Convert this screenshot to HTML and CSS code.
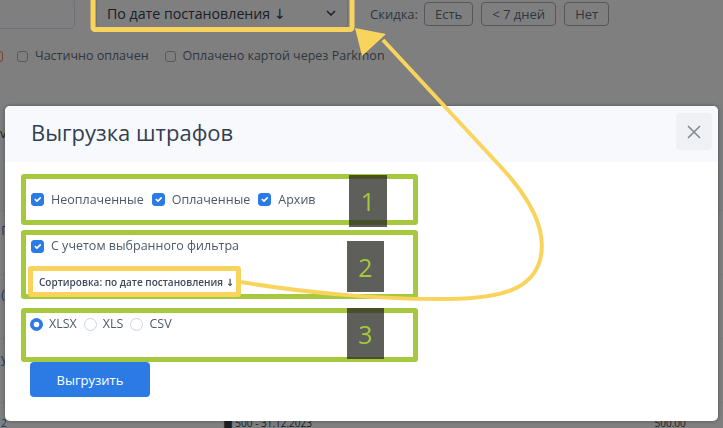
FILE: index.html
```html
<!DOCTYPE html>
<html lang="ru">
<head>
    <meta charset="UTF-8">
    <meta name="viewport" content="width=device-width, initial-scale=1.0">
    <title>Штрафы</title>
    <link rel="stylesheet" href="styles.css">
</head>
<body>
    <div class="page">
        <div class="toolbar">
            <div class="search"></div>
            <div class="sort-select">
                <span>По дате постановления ↓</span>
                <svg width="10" height="6" viewBox="0 0 10 6"><polyline points="1,1 5,5 9,1" fill="none" stroke="#344050" stroke-width="1.5"/></svg>
            </div>
            <div class="discount">
                <span class="discount-label">Скидка:</span>
                <button class="btn-outline">Есть</button>
                <button class="btn-outline">&lt; 7 дней</button>
                <button class="btn-outline">Нет</button>
            </div>
        </div>
        <div class="filters">
            <span class="box box-orange"></span>
            <label class="filter"><span class="box"></span>Частично оплачен</label>
            <label class="filter"><span class="box"></span>Оплачено картой через Parkmon</label>
        </div>
        <div class="table">
            <div class="table-head">v</div>
            <div class="table-row"><span class="cell-first">Г</span></div>
            <div class="table-row"><span class="cell-first">(</span></div>
            <div class="table-row"><span class="cell-first">у</span></div>
            <div class="table-row table-row-last">
                <span class="cell-first">2</span>
                <span class="cell-mid">■ 500 - 31.12.2023</span>
                <span class="cell-sum">500.00</span>
            </div>
        </div>
    </div>

    <div class="overlay">
        <div class="modal">
            <div class="modal-header">
                <h2 class="modal-title">Выгрузка штрафов</h2>
                <button class="btn-close">
                    <svg width="14" height="14" viewBox="0 0 14 14"><path d="M1 1L13 13M13 1L1 13" stroke="#858a92" stroke-width="1.6"/></svg>
                </button>
            </div>
            <div class="modal-body">
                <div class="group group-status">
                    <label class="check"><input type="checkbox" checked>Неоплаченные</label>
                    <label class="check"><input type="checkbox" checked>Оплаченные</label>
                    <label class="check"><input type="checkbox" checked>Архив</label>
                    <span class="mark mark-1">1</span>
                </div>
                <div class="group group-filter">
                    <label class="check"><input type="checkbox" checked>С учетом выбранного фильтра</label>
                    <div class="sort-note">Сортировка: по дате постановления ↓</div>
                    <span class="mark mark-2">2</span>
                </div>
                <div class="group group-format">
                    <label class="radio"><input type="radio" name="format" checked>XLSX</label>
                    <label class="radio"><input type="radio" name="format">XLS</label>
                    <label class="radio"><input type="radio" name="format">CSV</label>
                    <span class="mark mark-3">3</span>
                </div>
                <button class="btn-primary">Выгрузить</button>
            </div>
        </div>
    </div>

    <svg class="annotations" width="723" height="428" viewBox="0 0 723 428">
        <rect x="93" y="-3" width="259" height="32.5" rx="2" fill="none" stroke="#f9d45c" stroke-width="5"/>
        <path d="M383 40 L500 166 C530 198 548 230 540 260 C532 288 505 298 450 299 C380 300 300 292 241 282" fill="none" stroke="#f9d45c" stroke-width="4"/>
        <polygon points="355,28 386,34 362,56" fill="#f9d45c"/>
    </svg>
</body>
</html>
```

FILE: styles.css
```css
* {
    box-sizing: border-box;
}

body {
    margin: 0;
    width: 723px;
    height: 428px;
    overflow: hidden;
    background: #fff;
    font-family: 'Open Sans', 'DejaVu Sans', sans-serif;
    color: #5e6e82;
}

/* page behind the modal */
.page {
    height: 428px;
    overflow: hidden;
}

.toolbar {
    display: flex;
    align-items: flex-start;
    margin-top: -2px;
}

.search {
    width: 85px;
    height: 31px;
    margin-left: -10px;
    border: 1px solid #d8e2ef;
    border-radius: 5px;
}

.sort-select {
    width: 252px;
    height: 30px;
    margin-left: 21px;
    padding: 0 11px 0 10px;
    border: 1px solid #d8e2ef;
    border-radius: 4px;
    display: flex;
    align-items: center;
    justify-content: space-between;
    font-size: 14.2px;
    color: #344050;
}

.discount {
    display: flex;
    align-items: center;
    margin-left: 22px;
    margin-top: 4px;
}

.discount-label {
    font-size: 13px;
    margin-right: 6px;
}

.btn-outline {
    height: 24px;
    padding: 0 10px;
    margin-right: 8px;
    border: 1px solid #a9aeb6;
    border-radius: 4px;
    background: transparent;
    font-family: inherit;
    font-size: 13px;
    color: #5e6e82;
}

.filters {
    display: flex;
    align-items: center;
    margin-top: 19px;
    font-size: 12.5px;
    line-height: 16px;
}

.box {
    width: 11px;
    height: 11px;
    margin-right: 7px;
    border: 1px solid #aab3bf;
    border-radius: 3px;
    background: #fff;
}

.box-orange {
    margin-left: -8px;
    margin-right: 14px;
    border-color: #f5803e;
}

.filter {
    display: flex;
    align-items: center;
    margin-right: 16px;
}

.table {
    margin-top: 46px;
    font-size: 13px;
}

.table-head {
    height: 101px;
    padding-top: 14px;
    background: #f9fafd;
    border-bottom: 1px solid #edf2f9;
    color: #344050;
}

.table-row {
    height: 64px;
    padding-top: 10px;
    border-bottom: 1px solid #edf2f9;
}

.table-row-last {
    height: 25px;
    padding-top: 15px;
    border-bottom: 0;
    font-size: 10px;
    line-height: 10px;
}

.cell-first {
    padding-left: 1px;
    color: #2c7be5;
}

.cell-mid {
    margin-left: 214px;
    color: #344050;
}

.cell-sum {
    margin-left: 340px;
    color: #344050;
}

/* modal */
.overlay {
    position: fixed;
    inset: 0;
    padding: 106px 5px 0;
    background: rgba(0, 0, 0, 0.5);
}

.modal {
    background: #fff;
    border-radius: 5px;
    box-shadow: 0 0 4px rgba(0, 0, 0, 0.35);
    overflow: hidden;
}

.modal-header {
    height: 56px;
    padding: 0 6px 0 26px;
    display: flex;
    justify-content: space-between;
    align-items: flex-start;
    background: #f8f9fd;
}

.modal-title {
    margin: 0;
    font-size: 22px;
    font-weight: 400;
    line-height: 52px;
    color: #344050;
}

.btn-close {
    width: 36px;
    height: 37px;
    margin-top: 7px;
    border: 0;
    border-radius: 4px;
    background: #eff1f5;
    display: flex;
    align-items: center;
    justify-content: center;
}

.modal-body {
    padding: 12px 16px 24px;
}

.group {
    position: relative;
    width: 397px;
    border: 5px solid #a5c83e;
    border-radius: 3px;
    display: flex;
}

.group-status {
    height: 51px;
    padding: 0 5px;
    margin-bottom: 5px;
    align-items: center;
}

.group-filter {
    padding: 2px 5px 0;
    margin-bottom: 9px;
    flex-direction: column;
    align-items: flex-start;
}

.group-format {
    height: 54px;
    padding: 2px 4px 0;
    align-items: flex-start;
}

.check, .radio {
    display: flex;
    align-items: center;
    gap: 7px;
    margin-right: 8px;
    font-size: 12.5px;
    line-height: 18px;
    color: #4d5969;
}

.radio {
    gap: 6px;
    margin-right: 7px;
}

.check input, .radio input {
    appearance: none;
    width: 13px;
    height: 13px;
    margin: 0;
    border: 1px solid #c8d3e0;
    background: #fff no-repeat center / contain;
}

.check input {
    border-radius: 3px;
}

.radio input {
    border-radius: 50%;
}

.check input:checked {
    border-color: #2c7be5;
    background-color: #2c7be5;
    background-image: url("data:image/svg+xml,%3csvg xmlns='http://www.w3.org/2000/svg' viewBox='0 0 20 20'%3e%3cpath fill='none' stroke='%23fff' stroke-linecap='round' stroke-linejoin='round' stroke-width='3' d='m6 10 3 3 6-6'/%3e%3c/svg%3e");
}

.radio input:checked {
    border-color: #2c7be5;
    background-color: #2c7be5;
    background-image: url("data:image/svg+xml,%3csvg xmlns='http://www.w3.org/2000/svg' viewBox='-4 -4 8 8'%3e%3ccircle r='2' fill='%23fff'/%3e%3c/svg%3e");
}

.sort-note {
    width: 213px;
    height: 31px;
    margin: 11px 0 -3px -3px;
    padding: 0 6px;
    border: 5px solid #f9d45c;
    border-radius: 3px;
    display: flex;
    align-items: center;
    font-size: 10px;
    font-weight: 600;
    color: #3e4a5b;
    white-space: nowrap;
}

.mark {
    position: absolute;
    width: 37px;
    height: 51px;
    display: flex;
    align-items: center;
    justify-content: center;
    background: rgba(40, 40, 36, 0.75);
    font-size: 25px;
    color: #a5c83e;
}

.mark-1 { left: 323px; top: -4px; width: 38px; height: 52px; }
.mark-2 { left: 321px; top: 6px; }
.mark-3 { left: 321px; top: -5px; }

.btn-primary {
    width: 120px;
    height: 35px;
    margin-left: 9px;
    border: 0;
    border-radius: 4px;
    background: #2c7be5;
    font-family: inherit;
    font-size: 13px;
    color: #fff;
}

/* annotation arrow and frame */
.annotations {
    position: fixed;
    top: 0;
    left: 0;
    pointer-events: none;
}
```
